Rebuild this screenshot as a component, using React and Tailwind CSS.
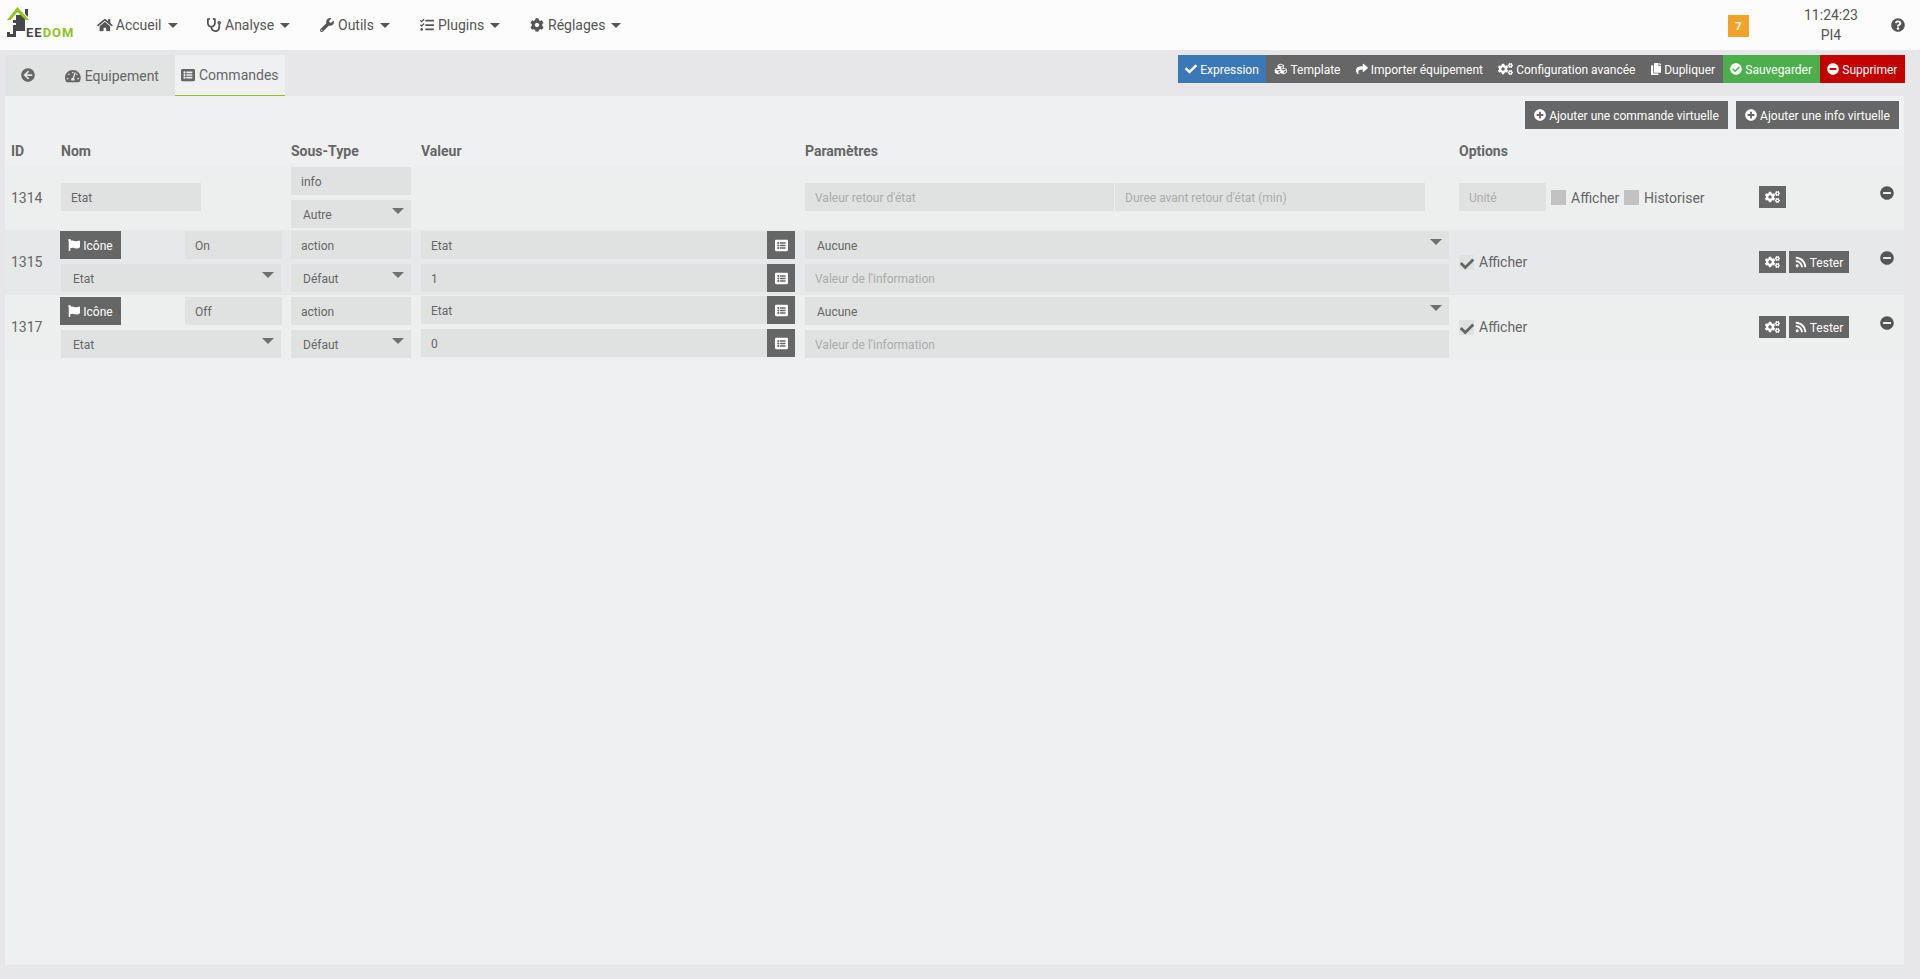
import {
  FaArrowCircleLeft,
  FaCheck,
  FaCheckCircle,
  FaCog,
  FaCogs,
  FaCopy,
  FaCubes,
  FaFlag,
  FaHome,
  FaListAlt,
  FaMinusCircle,
  FaPlusCircle,
  FaQuestionCircle,
  FaRss,
  FaShare,
  FaStethoscope,
  FaTachometerAlt,
  FaTasks,
  FaWrench,
} from "react-icons/fa";

const navItems = [
  { label: "Accueil", icon: FaHome, cls: "w-[110px]", iconCls: "mr-[3px] w-[1.125em]" },
  { label: "Analyse", icon: FaStethoscope, cls: "w-[113px]", iconCls: "mr-1" },
  { label: "Outils", icon: FaWrench, cls: "w-[100px]", iconCls: "mr-1" },
  { label: "Plugins", icon: FaTasks, cls: "w-[110px]", iconCls: "mr-1" },
  { label: "Réglages", icon: FaCog, cls: "", iconCls: "mr-1" },
];

const toolbar = [
  { label: "Expression", icon: FaCheck, cls: "bg-[#3c78b5]" },
  { label: "Template", icon: FaCubes, cls: "bg-[#666666]", iconCls: "w-[1.125em]" },
  { label: "Importer équipement", icon: FaShare, cls: "bg-[#666666]" },
  { label: "Configuration avancée", icon: FaCogs, cls: "bg-[#666666]", iconCls: "w-[1.25em]" },
  { label: "Dupliquer", icon: FaCopy, cls: "bg-[#666666]", iconCls: "w-[0.875em]" },
  { label: "Sauvegarder", icon: FaCheckCircle, cls: "bg-[#4cae4c]" },
  { label: "Supprimer", icon: FaMinusCircle, cls: "bg-[#c20000]" },
];

const cols = "grid-cols-[56px_230px_130px_384px_654px_1fr]";

function Logo() {
  return (
    <div className="relative h-[40px] w-[70px] shrink-0">
      <svg viewBox="0 0 32 40" className="absolute left-0 top-0 h-[40px] w-[32px]">
        <path d="M9 10 L18 10 L18 26 L9 26 Z" fill="#46484a" />
        <path d="M18 4 L21 4 L21 12 L18 9 Z" fill="#46484a" />
        <path d="M0 15 L10.5 2 L22 15 L18.5 15 L10.5 7 L3.5 15 Z" fill="#94c11f" />
        <path d="M6 20 L9 20 L9 32 L0 32 L0 27 L3 27 L3 29 L6 29 Z" fill="#46484a" />
        <rect x="6" y="15" width="3" height="3" fill="#46484a" />
      </svg>
      <span className="absolute left-[19px] top-[20px] text-[13px] font-bold tracking-[1px] leading-[16px] text-[#46484a] font-['Roboto',sans-serif]">
        EE<span className="text-[#94c11f]">DOM</span>
      </span>
    </div>
  );
}

function Field({ value, placeholder, className = "" }) {
  return (
    <input
      readOnly
      defaultValue={value}
      placeholder={placeholder}
      className={`h-7 bg-[#e0e2e1] px-[10px] pt-px text-xs text-[#666666] placeholder:text-[#ababab] outline-none ${className}`}
    />
  );
}

function Select({ value, className = "" }) {
  return (
    <div className={`relative h-7 bg-[#e0e2e1] pl-3 text-xs leading-[30px] text-[#666666] ${className}`}>
      {value}
      <span className="absolute right-[7px] top-2 h-0 w-0 border-x-[6px] border-t-[6px] border-x-transparent border-t-[#707070]" />
    </div>
  );
}

function Btn({ icon: Icon, label, className = "", iconCls = "" }) {
  return (
    <button className={`flex items-center justify-center gap-[3px] bg-[#666666] text-xs text-white ${className}`}>
      <Icon className={`text-[12px] ${iconCls}`} />
      {label && <span className="pt-px">{label}</span>}
    </button>
  );
}

function Check({ checked, label, className = "" }) {
  return (
    <span className={`flex h-[15px] items-center text-sm text-[#666666] ${className}`}>
      <span className={`mr-[5px] flex h-[15px] w-[15px] items-center justify-center ${checked ? "bg-[#e0e2e1]" : "bg-[#c2c2c2]"}`}>
        {checked && <FaCheck className="mt-[3px] text-[14px] text-[#666666]" />}
      </span>
      <span className={checked ? "-mt-[2px]" : ""}>{label}</span>
    </span>
  );
}

function ValueField({ value }) {
  return (
    <div className="flex h-7 w-[374px]">
      <Field value={value} className="min-w-0 flex-1" />
      <button className="flex w-7 items-center justify-center bg-[#666666] text-white">
        <FaListAlt className="text-[13px]" />
      </button>
    </div>
  );
}

function ActionRow({ id, name, value, shaded, top }) {
  return (
    <div className={`grid h-[65px] ${cols} items-start ${shaded ? "bg-[#e7e8e9]" : "bg-[#edefee]"}`}>
      <div className="self-center pb-[2px] pl-[6px] text-sm leading-none text-[#666666]">{id}</div>
      <div className={`flex flex-col gap-[5px] ${top}`}>
        <div className="flex h-7 w-[221px] justify-between">
          <Btn icon={FaFlag} label="Icône" className="-ml-px w-[61px]" />
          <Field value={name} className="w-[97px]" />
        </div>
        <Select value="Etat" className="w-[220px]" />
      </div>
      <div className={`flex flex-col gap-[5px] ${top}`}>
        <Field value="action" className="w-[120px]" />
        <Select value="Défaut" className="w-[120px]" />
      </div>
      <div className="mt-px flex flex-col gap-[5px]">
        <ValueField value="Etat" />
        <ValueField value={value} />
      </div>
      <div className={`flex flex-col gap-[5px] ${top}`}>
        <Select value="Aucune" className="w-[644px]" />
        <Field placeholder="Valeur de l'information" className="w-[644px]" />
      </div>
      <div className="mt-[21px] flex items-start">
        <Check checked label="Afficher" className="mt-1 w-[300px]" />
        <div className="flex gap-[3px]">
          <Btn icon={FaCogs} iconCls="w-[1.25em]" className="h-[22px] w-[27px]" />
          <Btn icon={FaRss} label="Tester" className="h-[22px] w-[60px]" />
        </div>
        <FaMinusCircle className="ml-[31px] text-[14px] text-[#555555]" />
      </div>
    </div>
  );
}

export default function App() {
  return (
    <div className="h-[979px] overflow-hidden bg-[#e7e7e9] font-['Roboto',sans-serif] text-[#666666]">
      <nav className="flex h-[50px] items-center bg-[#fcfcfc] pl-[7px]">
        <Logo />
        <div className="ml-5 flex items-center text-sm text-[#555555]">
          {navItems.map((n) => (
            <div key={n.label} className={`flex items-center ${n.cls}`}>
              <n.icon className={`text-[14px] ${n.iconCls}`} />
              {n.label}
              <span className="ml-[6px] mt-px h-0 w-0 border-x-[5px] border-t-[5px] border-x-transparent border-t-[#555555]" />
            </div>
          ))}
        </div>
        <div className="ml-auto flex items-center">
          <span className="mt-[2px] flex h-[22px] w-[21px] items-center justify-center bg-[#f0a22a] pt-[3px] text-[11px] font-bold text-white">7</span>
          <div className="ml-[42px] w-[80px] text-center text-sm leading-[20px] text-[#555555]">
            <div>11:24:23</div>
            <div>PI4</div>
          </div>
          <FaQuestionCircle className="ml-[20px] mr-[15px] text-[14px] text-[#555555]" />
        </div>
      </nav>

      <div className="ml-[5px] mr-[15px] mt-[5px] flex h-[41px] items-start justify-between">
        <div className="flex h-[41px]">
          <div className="flex w-[170px] bg-[#e2e3e3] text-sm">
            <div className="flex w-[41px] items-center justify-center pb-[1px]">
              <FaArrowCircleLeft className="ml-1 text-[14px]" />
            </div>
            <div className="flex items-center gap-1 pl-[19px]">
              <FaTachometerAlt className="w-[1.125em] text-[14px]" />
              Equipement
            </div>
          </div>
          <div className="flex w-[110px] items-center gap-1 border-b border-[#94c11f] bg-[#eff0f2] pl-[6px] text-sm">
            <FaListAlt className="text-[14px]" />
            Commandes
          </div>
        </div>
        <div className="flex h-7">
          {toolbar.map((b) => (
            <button key={b.label} className={`flex items-center gap-[3px] px-[7.6px] text-xs text-white ${b.cls}`}>
              <b.icon className={`text-[12px] ${b.iconCls || ""}`} />
              <span className="pt-px">{b.label}</span>
            </button>
          ))}
        </div>
      </div>

      <main className="ml-[5px] h-[869px] w-[1899px] bg-[#eff0f2]">
        <div className="flex justify-end gap-2 pr-[5px] pt-[5px]">
          <Btn icon={FaPlusCircle} label="Ajouter une commande virtuelle" className="h-7 w-[203px]" />
          <Btn icon={FaPlusCircle} label="Ajouter une info virtuelle" className="h-7 w-[163px]" />
        </div>

        <div className={`grid h-[37px] ${cols} items-center pt-[7px] text-sm font-bold text-[#666666]`}>
          <div className="pl-[6px]">ID</div>
          <div>Nom</div>
          <div>Sous-Type</div>
          <div>Valeur</div>
          <div>Paramètres</div>
          <div>Options</div>
        </div>

        <div className={`grid h-[64px] ${cols} items-start bg-[#edefee]`}>
          <div className="self-center pl-[6px] text-sm leading-none text-[#666666]">1314</div>
          <Field value="Etat" className="mt-[17px] w-[140px]" />
          <div className="mt-px flex flex-col gap-[5px]">
            <Field value="info" className="w-[120px]" />
            <Select value="Autre" className="w-[120px]" />
          </div>
          <div />
          <div className="mt-[17px] flex gap-px">
            <Field placeholder="Valeur retour d'état" className="w-[309px]" />
            <Field placeholder="Duree avant retour d'état (min)" className="w-[310px]" />
          </div>
          <div className="mt-[17px] flex items-start">
            <Field placeholder="Unité" className="h-7 w-[87px]" />
            <div className="flex w-[213px] pl-[5px] pt-[7px]">
              <Check label="Afficher" className="w-[73px]" />
              <Check label="Historiser" />
            </div>
            <Btn icon={FaCogs} iconCls="w-[1.25em]" className="mt-[3px] h-[22px] w-[27px]" />
            <FaMinusCircle className="ml-[94px] mt-[3px] text-[14px] text-[#555555]" />
          </div>
        </div>
        <ActionRow id="1315" name="On" value="1" shaded top="mt-px" />
        <ActionRow id="1317" name="Off" value="0" top="mt-[2px]" />
      </main>
    </div>
  );
}
